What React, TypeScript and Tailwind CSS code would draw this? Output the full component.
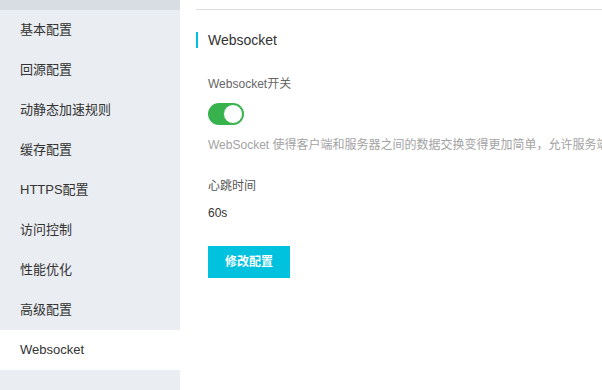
import React from "react";

const items = [
  "基本配置",
  "回源配置",
  "动静态加速规则",
  "缓存配置",
  "HTTPS配置",
  "访问控制",
  "性能优化",
  "高级配置",
  "Websocket",
];

export default function App() {
  const font = { fontFamily: '"Liberation Sans", Arial, "Noto Sans CJK SC", sans-serif' };
  return (
    <div className="flex h-[390px] w-[602px] overflow-hidden bg-white" style={font}>
      <div className="flex w-[180px] shrink-0 flex-col bg-[#eaedf1]">
        <div className="h-[10px] bg-[#d8dde3]" />
        {items.map((it) => (
          <div
            key={it}
            className={
              "flex h-[40px] items-center pl-[20px] text-[13px] text-[#333] " +
              (it === "Websocket" ? "bg-white" : "")
            }
          >
            {it}
          </div>
        ))}
        <div className="flex-1" />
      </div>
      <div className="min-w-0 flex-1 overflow-hidden pl-[16px]">
        <div className="mt-[9px] border-t border-[#dcdcdc]" />
        <div className="mt-[22px] flex h-[16px] items-center border-l-2 border-[#00c1de] pl-[10px]">
          <span className="text-[14px] leading-[16px] text-[#333]">Websocket</span>
        </div>
        <div className="pl-[12px]">
          <div className="mt-[26px] text-[12px] leading-[20px] text-[#666]">Websocket开关</div>
          <div className="mt-[9px] flex h-[22px] w-[36px] items-center justify-end rounded-full bg-[#37b24d] pr-[1px]">
            <div className="h-[20px] w-[20px] rounded-full border border-[#37b24d] bg-white" />
          </div>
          <div className="mt-[10px] whitespace-nowrap text-[12px] leading-[20px] text-[#a3a3a3]">
            WebSocket 使得客户端和服务器之间的数据交换变得更加简单，允许服务端主动向客户端推送数据。
          </div>
          <div className="mt-[21px] text-[12px] leading-[20px] text-[#555]">心跳时间</div>
          <div className="mt-[7px] text-[12px] leading-[20px] text-[#333]">60s</div>
          <button className="mt-[23px] flex h-[32px] w-[82px] items-center justify-center bg-[#00c1de] text-[12px] font-bold text-white">
            修改配置
          </button>
        </div>
      </div>
    </div>
  );
}
